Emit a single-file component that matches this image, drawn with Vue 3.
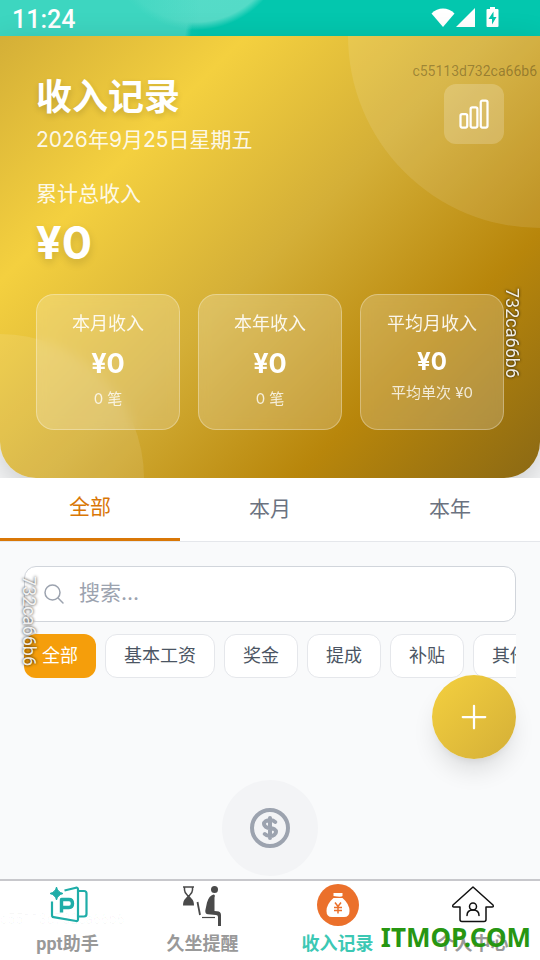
<script setup>
import { ref } from 'vue'

const stats = [
  { label: '本月收入', value: '¥0', note: '0 笔' },
  { label: '本年收入', value: '¥0', note: '0 笔' },
  { label: '平均月收入', value: '¥0', note: '平均单次 ¥0', compact: true }
]
const periods = ['全部', '本月', '本年']
const period = ref('全部')
const categories = ['全部', '基本工资', '奖金', '提成', '补贴', '其他']
const category = ref('全部')
const keyword = ref('')
</script>

<template>
  <div class="screen">
    <div class="status">
      <span class="clock">11:24</span>
      <svg class="status-icons" width="70" height="24" viewBox="0 0 70 24" fill="#fff" aria-hidden="true">
        <path d="M0.500 7.500C7 0.700 17 0.700 23.500 7.500L12 21z" />
        <path d="M44 2V21H25z" />
        <path fill-rule="evenodd" d="M59 1h5v2h2.500q1 0 1 1v16q0 1-1 1h-10q-1 0-1-1V4q0-1 1-1H59zM62.500 5.500L57.500 13h3.500v5.500L65.500 11H62.500z" />
      </svg>
    </div>

    <header class="hero">
      <div class="glow glow-top"></div>
      <div class="glow glow-bottom"></div>
      <div class="hero-top">
        <div>
          <h1>收入记录</h1>
          <p class="date">2026年9月25日星期五</p>
        </div>
        <button class="chart" type="button" aria-label="统计">
          <svg width="36" height="36" viewBox="0 0 24 24" fill="none" stroke="currentColor" stroke-width="1.5" stroke-linejoin="round" aria-hidden="true">
            <path d="M3 13.125C3 12.504 3.504 12 4.125 12h2.250c.621 0 1.125.504 1.125 1.125v6.750C7.500 20.496 6.996 21 6.375 21h-2.250A1.125 1.125 0 013 19.875v-6.750zM9.750 8.625c0-.621.504-1.125 1.125-1.125h2.250c.621 0 1.125.504 1.125 1.125v11.250c0 .621-.504 1.125-1.125 1.125h-2.250a1.125 1.125 0 01-1.125-1.125V8.625zM16.500 4.125c0-.621.504-1.125 1.125-1.125h2.250C20.496 3 21 3.504 21 4.125v15.750c0 .621-.504 1.125-1.125 1.125h-2.250a1.125 1.125 0 01-1.125-1.125V4.125z" />
          </svg>
        </button>
      </div>
      <p class="total-label">累计总收入</p>
      <p class="total">¥0</p>
      <div class="stats">
        <div v-for="s in stats" :key="s.label" class="stat" :class="{ compact: s.compact }">
          <span class="stat-label">{{ s.label }}</span>
          <strong class="stat-value">{{ s.value }}</strong>
          <span class="stat-note">{{ s.note }}</span>
        </div>
      </div>
    </header>

    <div class="tabs">
      <button v-for="p in periods" :key="p" type="button" class="tab" :class="{ active: p === period }" @click="period = p">{{ p }}</button>
    </div>

    <main class="content">
      <label class="search">
        <svg width="24" height="24" viewBox="0 0 24 24" fill="none" stroke="#9ca3af" stroke-width="1.5" stroke-linecap="round" aria-hidden="true">
          <path d="M21 21l-5.197-5.197m0 0A7.500 7.500 0 105.196 5.196a7.500 7.500 0 0010.607 10.607z" />
        </svg>
        <input v-model="keyword" type="text" placeholder="搜索..." aria-label="搜索" />
      </label>
      <div class="chips">
        <button v-for="c in categories" :key="c" type="button" class="chip" :class="{ active: c === category }" @click="category = c">{{ c }}</button>
      </div>
      <div class="empty">
        <svg width="48" height="48" viewBox="0 0 24 24" fill="none" stroke="#9ca3af" stroke-width="2" stroke-linecap="round" stroke-linejoin="round" aria-hidden="true">
          <path d="M12 8c-1.657 0-3 .895-3 2s1.343 2 3 2 3 .895 3 2-1.343 2-3 2m0-8c1.110 0 2.080.402 2.599 1M12 8V7m0 1v8m0 0v1m0-1c-1.110 0-2.080-.402-2.599-1M21 12a9 9 0 11-18 0 9 9 0 0118 0z" />
        </svg>
      </div>
    </main>

    <button class="fab" type="button" aria-label="添加">
      <svg width="36" height="36" viewBox="0 0 24 24" fill="none" stroke="#fff" stroke-width="1.5" stroke-linecap="round" aria-hidden="true">
        <path d="M12 4.500v15m7.500-7.500h-15" />
      </svg>
    </button>

    <nav class="nav">
      <a href="#ppt">
        <svg width="44" height="44" viewBox="0 0 44 44" fill="none" stroke="#1fada8" stroke-width="2.200" stroke-linejoin="round" aria-hidden="true">
          <path d="M18.500 7.500L30 4.700Q32 4.500 32 6.500V36Q32 38.500 30 38L7.500 34.200Q6 34 6 32V18.500" />
          <path d="M32 8h6q2.500 0 2.500 2.500v20.500q0 2.500-2.500 2.500h-6" />
          <path d="M15.500 29.500V16.500h7.500q3.500 0 3.500 4t-3.500 4h-7.500" stroke-width="3.400" />
          <path d="M10.500 4Q11.500 9 17 10.500Q11.500 12 10.500 17Q9.500 12 4 10.500Q9.500 9 10.500 4z" fill="#1fada8" stroke="#1fada8" stroke-width="1" />
        </svg>
        <span>ppt助手</span>
      </a>
      <a href="#sit">
        <svg width="44" height="44" viewBox="0 0 44 44" fill="none" stroke="#4a4a4a" aria-hidden="true">
          <path d="M2 4h11M3.500 4v3c0 3 1.500 4 4 6.500 2.500-2.500 4-3.500 4-6.500V4" stroke-width="1.500" />
          <path d="M7.500 12L4.500 15.500Q2 17.500 2 22.500h11Q13 17.500 10.500 15.500z" fill="#4a4a4a" stroke="none" />
          <circle cx="33.500" cy="6.500" r="3.500" fill="#4a4a4a" stroke="none" />
          <path d="M32.500 11.500Q28 12.500 26 19.500L24.300 27.500Q24 31 27 31.300L35 32Q37 32 37 34v9h3V32q0-3.500-4-3.700l-2.500-.3V14.500q1-3-1-3z" fill="#4a4a4a" stroke="none" />
          <path d="M16.500 19l2.500 13" stroke-width="1.800" />
          <path d="M21 34.500h13" stroke-width="1.200" />
        </svg>
        <span>久坐提醒</span>
      </a>
      <a href="#income" class="current">
        <svg width="44" height="44" viewBox="0 0 44 44" aria-hidden="true">
          <circle cx="22" cy="22" r="21" fill="#eb702b" />
          <path d="M17.500 10h9v3q-1 1.500-9 0z" fill="#fff" />
          <path d="M17.500 15h9Q33.500 21 33.500 28 33.500 34 28 34H16Q10.500 34 10.500 28 10.500 21 17.500 15z" fill="#fff" />
          <path d="M19 19.500l3 4 3-4M22 23.500v7M18 24.500h8M18 27.500h8" fill="none" stroke="#eb702b" stroke-width="1.500" />
        </svg>
        <span>收入记录</span>
      </a>
      <a href="#me">
        <svg width="44" height="44" viewBox="0 0 44 44" fill="none" stroke="#111" stroke-width="1.500" stroke-linejoin="round" stroke-linecap="round" aria-hidden="true">
          <path d="M22 4L2 22q-1 2 1 2h6v12.500q0 2 2 2h22q2 0 2-2V24h6q2 0 1-2z" />
          <circle cx="22" cy="23.500" r="3.500" />
          <path d="M16 32.500Q16 27 22 27t6 5.500" />
        </svg>
        <span>个人中心</span>
      </a>
    </nav>

    <div class="mark mark-top">c55113d732ca66b6</div>
    <div class="mark mark-bottom">c55113d732ca66b6</div>
    <div class="mark mark-side mark-right">732ca66b6</div>
    <div class="mark mark-side mark-left">732ca66b6</div>
    <div class="mark site">ITMOP.COM</div>
  </div>
</template>

<style>
body {
  background: #f9fafb;
}
</style>

<style scoped>
.screen {
  position: relative;
  display: flex;
  flex-direction: column;
  height: 100vh;
  overflow: hidden;
  background: #f9fafb;
  font-family: Inter, "Noto Sans CJK SC", sans-serif;
}
h1, p {
  margin: 0;
}
button {
  font: inherit;
  border: 0;
  padding: 0;
  cursor: pointer;
}
svg {
  display: block;
  flex: none;
}
.status {
  flex: none;
  display: flex;
  align-items: center;
  justify-content: space-between;
  height: 36px;
  padding: 0 39px 0 12px;
  background:
    linear-gradient(90deg, #3dd6c0 100px, transparent 200px),
    radial-gradient(circle at 196px -62px, #58dcc9 0, #54dbc7 84px, transparent 92px),
    linear-gradient(100deg, #3dd6c0 0, #3dd6c0 188px, #03c7ae 194px);
}
.clock {
  padding-top: 4px;
  font: 500 25px/36px Roboto, sans-serif;
  color: #fff;
}
.hero {
  position: relative;
  flex: none;
  overflow: hidden;
  padding: 36px 36px 48px;
  border-radius: 0 0 36px 36px;
  background: linear-gradient(135deg, #d4af37 0%, #f4d03f 25%, #d4af37 50%, #b8860b 75%, #8b6914 100%);
  box-shadow: 0 12px 36px rgba(0, 0, 0, 0.2);
  color: #fff;
}
.glow {
  position: absolute;
  border-radius: 50%;
  background: rgba(255, 255, 255, 0.1);
}
.glow-top {
  top: 0;
  right: 0;
  width: 384px;
  height: 384px;
  transform: translate(50%, -50%);
}
.glow-bottom {
  bottom: 0;
  left: 0;
  width: 288px;
  height: 288px;
  transform: translate(-50%, 50%);
}
.hero-top {
  position: relative;
  display: flex;
  align-items: center;
  justify-content: space-between;
}
h1 {
  font-size: 36px;
  line-height: 50px;
  font-weight: 700;
  text-shadow: 0 3px 6px rgba(0, 0, 0, 0.15);
}
.date {
  margin-top: 2px;
  font-size: 21px;
  line-height: 32px;
  color: rgba(255, 255, 255, 0.9);
}
.chart {
  display: grid;
  place-items: center;
  width: 60px;
  height: 60px;
  border-radius: 12px;
  background: rgba(255, 255, 255, 0.2);
  color: #fff;
}
.total-label {
  position: relative;
  margin-top: 22px;
  font-size: 21px;
  line-height: 32px;
  color: rgba(255, 255, 255, 0.9);
}
.total {
  position: relative;
  margin-top: 6px;
  font-size: 45px;
  line-height: 54px;
  font-weight: 700;
  text-shadow: 0 4px 8px rgba(0, 0, 0, 0.15);
}
.stats {
  position: relative;
  display: grid;
  grid-template-columns: repeat(3, 1fr);
  gap: 18px;
  margin-top: 24px;
}
.stat {
  display: flex;
  flex-direction: column;
  align-items: center;
  padding: 17px 0 18px;
  border: 1px solid rgba(255, 255, 255, 0.3);
  border-radius: 18px;
  background: rgba(255, 255, 255, 0.2);
  backdrop-filter: blur(6px);
  white-space: nowrap;
}
.stat-label {
  font-size: 18px;
  line-height: 24px;
  color: rgba(255, 255, 255, 0.9);
}
.stat-value {
  margin-top: 10px;
  font-size: 27px;
  line-height: 36px;
}
.stat-note {
  margin-top: 5px;
  font-size: 15px;
  line-height: 24px;
  color: rgba(255, 255, 255, 0.8);
}
.compact .stat-value {
  font-size: 24px;
  line-height: 32px;
}
.compact .stat-note {
  margin-top: 3px;
}
.tabs {
  position: relative;
  flex: none;
  display: grid;
  grid-template-columns: repeat(3, 1fr);
  background: #fff;
  border-bottom: 1px solid #e5e7eb;
}
.tab {
  height: 63px;
  padding-bottom: 6px;
  background: none;
  font-size: 21px;
  color: #6b7280;
}
.tab.active {
  border-bottom: 3px solid #d97706;
  color: #d97706;
}
.content {
  flex: 1;
  min-height: 0;
  display: flex;
  flex-direction: column;
  padding: 24px 24px 0;
}
.search {
  flex: none;
  display: flex;
  align-items: center;
  gap: 13px;
  height: 56px;
  box-sizing: border-box;
  padding: 0 17px;
  border: 1px solid #d1d5db;
  border-radius: 12px;
  background: #fff;
}
.search input {
  flex: 1;
  min-width: 0;
  border: 0;
  padding: 0 0 2px;
  outline: 0;
  background: none;
  font: 400 21px/32px Inter, "Noto Sans CJK SC", sans-serif;
  color: #374151;
}
.search input::placeholder {
  color: #9ca3af;
}
.chips {
  flex: none;
  display: flex;
  gap: 9px;
  margin-top: 12px;
  overflow: hidden;
}
.chip {
  flex: none;
  height: 44px;
  padding: 0 18px 4px;
  border: 1px solid #e5e7eb;
  border-radius: 12px;
  background: #fff;
  font-size: 18px;
  color: #4b5563;
}
.chip.active {
  border: 0;
  background: #f59e0b;
  color: #fff;
}
.empty {
  flex: none;
  align-self: center;
  display: grid;
  place-items: center;
  width: 96px;
  height: 96px;
  margin-top: 102px;
  border-radius: 50%;
  background: #f3f4f6;
}
.fab {
  position: absolute;
  right: 24px;
  bottom: 201px;
  display: grid;
  place-items: center;
  width: 84px;
  height: 84px;
  border-radius: 50%;
  background: linear-gradient(135deg, #f4d03f, #d4af37);
  box-shadow: 0 15px 24px -4px rgba(0, 0, 0, 0.12), 0 6px 9px -6px rgba(0, 0, 0, 0.1);
}
.nav {
  position: relative;
  flex: none;
  display: grid;
  grid-template-columns: repeat(4, 1fr);
  padding: 2px 0;
  border-top: 2px solid #c8c8cc;
  background: #fff;
}
.nav a {
  display: flex;
  flex-direction: column;
  align-items: center;
  gap: 3px;
  font: 700 18px/28px Roboto, "Noto Sans CJK SC", sans-serif;
  color: #999;
  text-decoration: none;
}
.nav a.current {
  color: #3cc8b4;
}
.mark {
  position: absolute;
  pointer-events: none;
  font: 400 14px/18px Roboto, sans-serif;
  white-space: nowrap;
}
.mark-top {
  top: 62px;
  right: 3px;
  color: rgba(0, 0, 0, 0.3);
}
.mark-bottom {
  left: 0;
  bottom: 32px;
  color: rgba(0, 0, 0, 0.03);
}
.mark-side {
  writing-mode: vertical-rl;
  font-size: 18px;
  color: rgba(255, 255, 255, 0.9);
  text-shadow: 0 0 3px rgba(0, 0, 0, 0.9);
}
.mark-right {
  top: 288px;
  right: 19px;
}
.mark-left {
  top: 576px;
  left: 20px;
}
.site {
  right: 9px;
  bottom: 8px;
  font: 700 26px/30px "Noto Sans", sans-serif;
  color: #279612;
}
</style>
